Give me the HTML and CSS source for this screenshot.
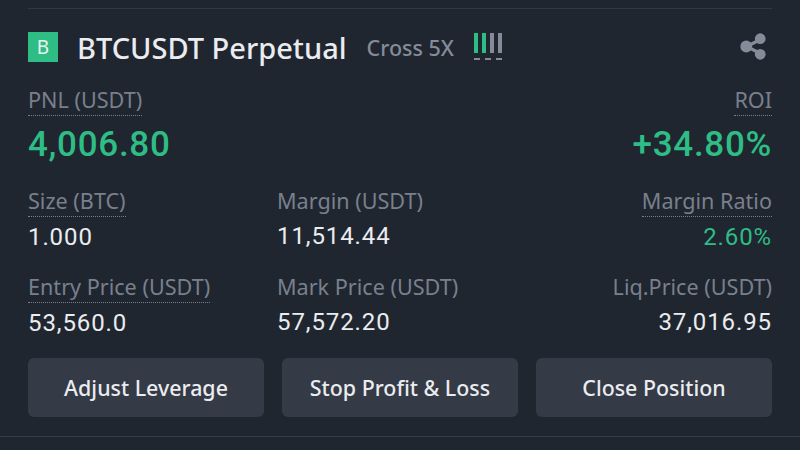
FILE: index.html
```html
<!DOCTYPE html>
<html lang="en">
<head>
<meta charset="utf-8">
<title>BTCUSDT Perpetual</title>
<link rel="stylesheet" href="styles.css">
</head>
<body>
<main class="card">
  <header class="head">
    <span class="badge">B</span>
    <h1 class="symbol">BTCUSDT Perpetual</h1>
    <span class="mode">Cross 5X</span>
    <span class="meter">
      <i class="bar on"></i><i class="bar on"></i><i class="bar"></i><i class="bar"></i>
    </span>
    <svg class="share" viewBox="0 0 28 28" width="29" height="29" aria-hidden="true">
      <path d="M21 7 7.5 14 21 21" fill="none" stroke="#858b98" stroke-width="3"/>
      <circle cx="20.5" cy="6.5" r="5.2" fill="#858b98"/>
      <circle cx="7" cy="14" r="5.7" fill="#858b98"/>
      <circle cx="20.5" cy="21.5" r="5.2" fill="#858b98"/>
    </svg>
  </header>

  <section class="pnl">
    <div class="cell">
      <span class="label dotted">PNL (USDT)</span>
      <span class="big green">4,006.80</span>
    </div>
    <div class="cell end">
      <span class="label dotted">ROI</span>
      <span class="big green">+34.80%</span>
    </div>
  </section>

  <section class="stats">
    <div class="cell">
      <span class="label dotted">Size (BTC)</span>
      <span class="value">1.000</span>
    </div>
    <div class="cell">
      <span class="label">Margin (USDT)</span>
      <span class="value">11,514.44</span>
    </div>
    <div class="cell end">
      <span class="label dotted">Margin Ratio</span>
      <span class="value rise">2.60%</span>
    </div>
    <div class="cell">
      <span class="label dotted">Entry Price (USDT)</span>
      <span class="value">53,560.0</span>
    </div>
    <div class="cell">
      <span class="label">Mark Price (USDT)</span>
      <span class="value">57,572.20</span>
    </div>
    <div class="cell end">
      <span class="label">Liq.Price (USDT)</span>
      <span class="value">37,016.95</span>
    </div>
  </section>

  <div class="actions">
    <button class="btn">Adjust Leverage</button>
    <button class="btn">Stop Profit &amp; Loss</button>
    <button class="btn">Close Position</button>
  </div>
</main>
</body>
</html>
```
FILE: styles.css
```css
* { box-sizing: border-box; }
html, body { margin: 0; height: 450px; overflow: hidden; }
body {
  background: #1f2630;
  font-family: "Noto Sans", "Liberation Sans", sans-serif;
}
.card {
  height: 437px;
  padding: 8px 28px 0;
  border-bottom: 1px solid #353c47;
}
.head {
  display: flex;
  align-items: center;
  height: 77px;
  border-top: 1px solid #323944;
  padding-bottom: 1px;
}
.badge {
  width: 30px;
  height: 30px;
  background: #2ebd85;
  color: #e8f5ef;
  font-size: 19px;
  line-height: 30px;
  text-align: center;
  flex: none;
}
.symbol {
  margin: 2px 0 0 19px;
  font-size: 29px;
  font-weight: 500;
  color: #eaecef;
  white-space: nowrap;
}
.mode {
  margin: 2px 0 0 20px;
  font-size: 21.5px;
  font-weight: 500;
  color: #858b98;
}
.meter {
  display: flex;
  gap: 3.5px;
  margin: 0 0 0 20px;
  padding-bottom: 5px;
  border-bottom: 2px dashed #858b98;
}
.bar { width: 4.5px; height: 20px; background: #858b98; }
.bar.on { background: #2ebd85; }
.share { margin-left: auto; margin-right: 4px; }
.pnl {
  display: flex;
  justify-content: space-between;
  height: 101px;
}
.cell { display: flex; flex-direction: column; align-items: flex-start; }
.cell.end { align-items: flex-end; }
.label {
  font-size: 21.6px;
  line-height: 30px;
  color: #79808c;
  white-space: nowrap;
}
.dotted { border-bottom: 1px dotted #79808c; }
.big {
  margin-top: 8px;
  font-family: Roboto, sans-serif;
  font-size: 35px;
  line-height: 42px;
  font-weight: 500;
  letter-spacing: 0.7px;
}
.green { color: #2ebd85; }
.stats {
  display: grid;
  grid-template-columns: 249px 1fr auto;
  grid-auto-rows: 86px;
}
.value {
  margin-top: 2px;
  font-family: Roboto, sans-serif;
  font-size: 24px;
  line-height: 36px;
  color: #eaecef;
  letter-spacing: 0.9px;
}
.value.rise { color: #2ebd85; }
.actions {
  display: grid;
  grid-template-columns: repeat(3, 1fr);
  gap: 18px;
}
.btn {
  height: 59px;
  border: 0;
  border-radius: 6px;
  background: #343a46;
  color: #eaecef;
  font-family: "Noto Sans", sans-serif;
  font-size: 21.4px;
  font-weight: 500;
}
```
